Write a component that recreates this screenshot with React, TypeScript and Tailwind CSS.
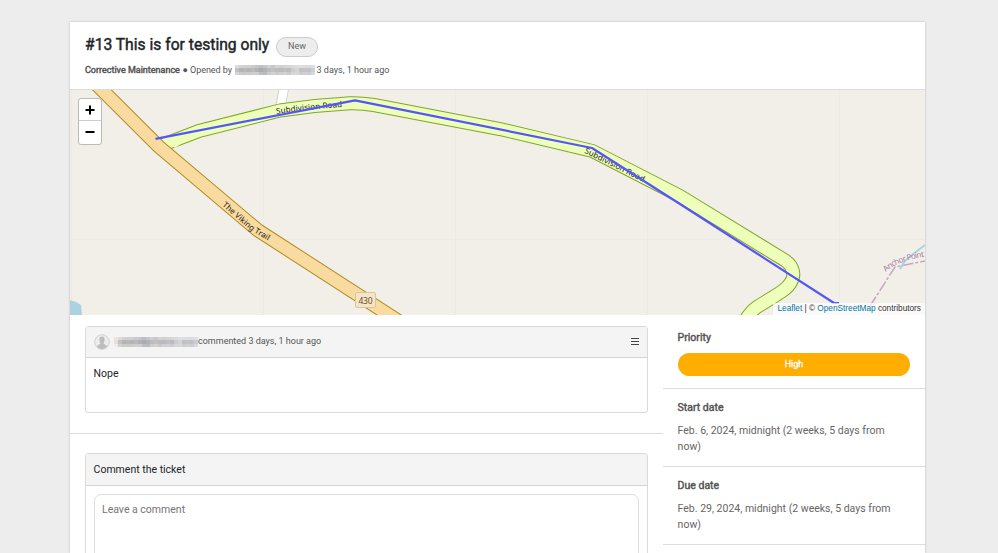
import React from "react";

const bold = "[-webkit-text-stroke:0.45px_currentColor]";

function Mosaic({ rows, cell }: { rows: string[][]; cell: number }) {
  return (
    <div className="flex shrink-0 flex-col">
      {rows.map((row, i) => (
        <div key={i} className="flex">
          {row.map((c, j) => (
            <span key={j} className="block" style={{ width: cell, height: i === 1 ? 4 : 3, backgroundColor: c }} />
          ))}
        </div>
      ))}
    </div>
  );
}

const top = "#dcdcdc #d2d2d4 #d0d0d0 #d0d0d2 #cacacc #c4c6c9 #bcc0c4 #c2c6ca #d0d0d2 #c8c8cc #d2d4d6 #d0d0d2 #d4d4d6 #d6d6d8 #d8dadc #dcdee0 #dedede #dcdcde #dadcde #d8e0e6".split(" ");
const mid = "#c2c2c4 #b4b4b8 #b8b8ba #b4b4b6 #bababc #b0b2b6 #a9abae #b0b2b6 #bcbcc0 #c2c0be #bcbcc0 #babac0 #c0c0c2 #bcbcc0 #cccccf #d2d6d9 #c2c2c4 #c4c4c8 #c0c2c6 #c8ced4".split(" ");
const low = "#d4d2d0 #ceccca #cacacc #cccccc #cecece #ccced0 #bcbec2 #b8bcc0 #cccccc #d4d2d0 #cacacc #d0d0d2 #d2d2d2 #cccccf #d4d6d8 #d8d8d8 #cecece #d0d0d2 #ccd0d4 #d4dade".split(" ");

const topWide = ["#ece5df", ...top];
const midWide = ["#e8dfd8", ...mid];
const lowWide = ["#f0ece6", ...low];

const road =
  "M161 145.500L199 131L280 110.5Q315 105 350 103.2Q362 103 374 105L500 129L592.5 151L680 196L786 261C794 267 795 276 791 282C788 288 783 291 757 307Q751 311 744 322";
const trail = "M90 78L158.500 146.300L257.500 230L400 322";

function MapView() {
  return (
    <div className="relative h-[225px] overflow-hidden bg-[#f2efe9]">
      <svg viewBox="70 90 855 225" width="855" height="225" className="block">
        <path d="M71.5 90V315M263.5 90V315M455.5 90V315M647.5 90V315M839.5 90V315M70 239.5H925" stroke="#edebe6" fill="none" />
        <path d="M70 300L76 302L81 305L82 315H70Z" fill="#aad3df" />
        <path d="M284 88L280 108" stroke="#c9c9c9" strokeWidth="10" />
        <path d="M284 88L280 109" stroke="#fff" strokeWidth="8.5" />
        <path d={road} fill="none" stroke="#7fa52e" strokeWidth="14" />
        <path d={road} fill="none" stroke="#eeffb9" strokeWidth="12" />
        <path d={trail} fill="none" stroke="#ad8d20" strokeWidth="14.2" />
        <path d={trail} fill="none" stroke="#fadb9f" strokeWidth="12.2" />
        <path d="M163 139L175 148L182 143L178 136Z" fill="#eeffb9" />
        <path d="M870 306L895 267L925 261" fill="none" stroke="#c8a5c3" strokeWidth="1.5" strokeDasharray="11 2 3 2" />
        <path d="M900 269L905 261Q909 257 925 245" fill="none" stroke="#aad3df" strokeWidth="2" />
        <g fontFamily="'Noto Sans'" fontSize="8" fill="#222">
          <path id="sub1" d="M276.500 114Q310 109 343 107" fill="none" />
          <text><textPath href="#sub1" textLength="66">Subdivision Road</textPath></text>
          <path id="sub2" d="M584 152.500L594 157.500L644 182.500" fill="none" />
          <text><textPath href="#sub2" textLength="66">Subdivision Road</textPath></text>
          <path id="viking" d="M222 205.500L251 230.500L274 244" fill="none" />
          <text><textPath href="#viking" textLength="58">The Viking Trail</textPath></text>
          <path id="anchor" d="M886 272Q896 261 926 256.500" fill="none" />
          <text fill="#ac80a5"><textPath href="#anchor" textLength="42">Anchor Point</textPath></text>
        </g>
        <path d="M155.500 138.800L355 100.300L592 148L680 204L834 303H839" fill="none" stroke="#5555fb" strokeWidth="2.200" strokeLinejoin="round" />
        <rect x="355.500" y="292.500" width="20" height="15" rx="1.500" fill="#f4e5ca" stroke="#d9c59c" />
        <text x="358.500" y="303.500" fontFamily="'Noto Sans'" fontSize="8.500" fill="#6c501c" textLength="14">430</text>
      </svg>
      <div className="absolute left-2 top-2 flex h-[47px] w-6 flex-col rounded-[3px] border border-[#bcbab6] bg-white">
        <span className="flex h-[22px] items-center justify-center border-b border-[#ccc]">
          <svg width="10" height="10" viewBox="0 0 10 10"><path d="M.5 5H9.500M5 .500V9.500" stroke="#000" strokeWidth="2" /></svg>
        </span>
        <span className="flex grow items-center justify-center pb-[2px]">
          <svg width="10" height="4" viewBox="0 0 10 4"><path d="M.5 2H9.500" stroke="#000" strokeWidth="2" /></svg>
        </span>
      </div>
      <div className="absolute bottom-0 right-0 h-3 whitespace-nowrap bg-white/70 px-1 font-['Liberation_Sans',sans-serif] text-[8.25px] leading-[11px] text-[#333]">
        <span className="text-[#0078a8]">Leaflet</span> | © <span className="text-[#0078a8]">OpenStreetMap</span> contributors
      </div>
    </div>
  );
}

function DateBlock({ label, date }: { label: string; date: string }) {
  return (
    <section className="h-[78px] border-b border-[#dcdcdc] px-[15px] pt-[11px]">
      <h2 className={`-ml-[0.4px] text-[10.5px] leading-4 ${bold}`}>{label}</h2>
      <p className="-ml-[0.4px] mt-[7px] text-[10.5px] leading-4 text-[#666]">{date}<br />now)</p>
    </section>
  );
}

export default function App() {
  return (
    <div className="h-[553px] overflow-hidden bg-[#ededed] px-[70px] pt-[22px] font-[Roboto,sans-serif] text-[#555]">
      <main className="h-[531px] w-[855px] bg-white shadow-[0_0_2px_rgba(0,0,0,0.25)]">
        <header className="h-[68px] border-b border-[#dcdcdc] px-[15px] pt-[12px]">
          <div className="flex h-[24px] items-start">
            <h1 className={`w-[184px] whitespace-nowrap text-[15.65px] leading-[21px] text-[#212529] ${bold}`}>#13 This is for testing only</h1>
            <span className="ml-[7px] mt-[3px] flex h-5 w-[42px] shrink-0 items-center justify-center rounded-full border border-[#ccc] bg-[#ededed] pb-px text-[9px] text-[#666]">New</span>
          </div>
          <div className="mt-[5px] flex h-[14px] items-center whitespace-nowrap text-[9px] leading-[14px]">
            <span className={bold}>Corrective Maintenance</span><span className="ml-[2.5px] tracking-[-0.03px]">● Opened by</span>
            <span className="ml-[2.5px] mr-[2px]"><Mosaic rows={[top, mid, low]} cell={4} /></span>
            <span>3 days, 1 hour ago</span>
          </div>
        </header>
        <MapView />
        <div className="flex">
          <div className="w-[593px]">
            <div className="h-[119px] border-b border-[#dcdcdc] px-[15px] pt-[11px]">
              <article className="h-[87px] w-[563px] rounded-[3px] border border-[#d9d9d9]">
                <div className="flex h-[31px] items-center border-b border-[#d4d4d4] bg-[#f4f4f4] px-2 text-[9px]">
                  <svg width="16" height="16" viewBox="0 0 16 16" className="shrink-0">
                    <circle cx="8" cy="8" r="7.300" fill="#ececec" stroke="#c9c9c9" strokeWidth=".8" />
                    <path d="M8 2.500C5 2.500 5 6 6 8.500L6.500 10Q3 11 3 12.500Q5 15 8 15T13 12.500Q13 11 9.500 10L10 8.500C11 6 11 2.500 8 2.500Z" fill="#bdbdbd" />
                  </svg>
                  <span className="ml-[4px]"><Mosaic rows={[topWide, midWide, lowWide]} cell={4} /></span>
                  <span className="whitespace-nowrap">commented 3 days, 1 hour ago</span>
                  <svg className="ml-auto" width="8" height="9" viewBox="0 0 8 9"><path d="M0 .500H8M0 3.500H8M0 6.500H8" stroke="#444" strokeWidth="1.2" /></svg>
                </div>
                <p className="px-2 pt-[8px] text-[10.500px] leading-4 text-[#212529]"><span className="-ml-[0.4px]">Nope</span></p>
              </article>
            </div>
            <div className="px-[15px] pt-[19px]">
              <section className="h-[110px] w-[563px] rounded-[3px] border border-[#d9d9d9]">
                <h2 className="flex h-8 items-center border-b border-[#d4d4d4] bg-[#f4f4f4] px-[7.6px] text-[10.500px] text-[#212529]">Comment the ticket</h2>
                <div className="mx-2 mt-2 h-20 rounded-[7px] border border-[#ddd] px-[7px] pt-[7px] text-[10.500px] leading-4 text-[#757575]">Leave a comment</div>
              </section>
            </div>
          </div>
          <aside className="w-[262px]">
            <section className="h-[74px] border-b border-[#dcdcdc] px-[15px] pt-[15px]">
              <h2 className={`-ml-[0.4px] text-[10.500px] leading-4 ${bold}`}>Priority</h2>
              <div className="mt-[7px] flex h-[23px] w-[232px] items-center justify-center rounded-full bg-[#ffae00] text-[9px] text-white [-webkit-text-stroke:0.3px_currentColor]">High</div>
            </section>
            <DateBlock label="Start date" date="Feb. 6, 2024, midnight (2 weeks, 5 days from" />
            <DateBlock label="Due date" date="Feb. 29, 2024, midnight (2 weeks, 5 days from" />
          </aside>
        </div>
      </main>
    </div>
  );
}
